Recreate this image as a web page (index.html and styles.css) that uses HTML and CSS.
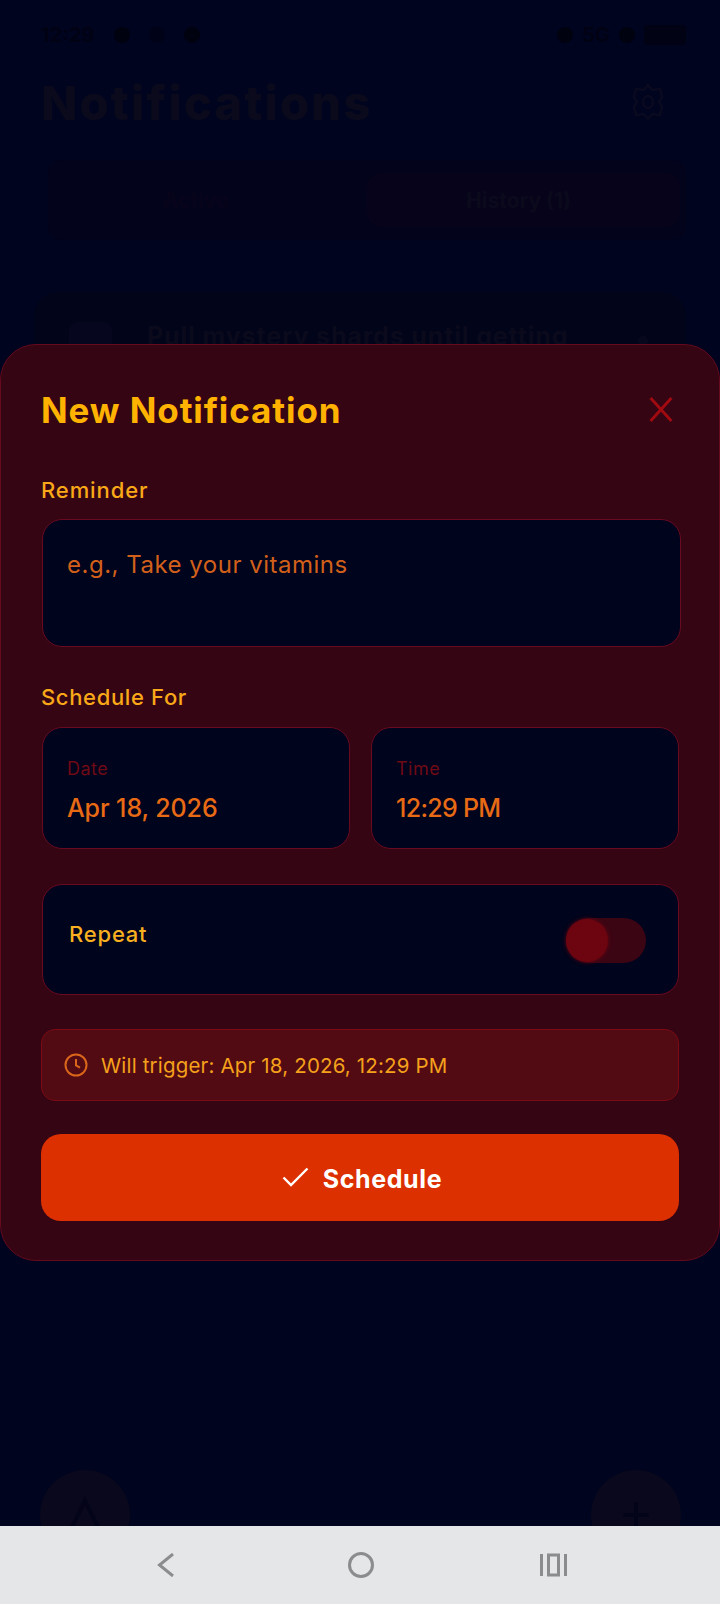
FILE: index.html
```html
<!DOCTYPE html>
<html lang="en">
<head>
<meta charset="utf-8">
<title>New Notification</title>
<link rel="stylesheet" href="styles.css">
</head>
<body>
<div class="screen">
  <main class="app">
    <div class="status">
      <div class="status-left"><span>12:29</span><i class="dot"></i><i class="dot dim"></i><i class="dot"></i></div>
      <div class="status-right"><i class="dot"></i><span>5G</span><i class="dot"></i><i class="batt"></i></div>
    </div>
    <header class="app-head">
      <h1>Notifications</h1>
      <svg class="gear" viewBox="0 0 32 38" fill="none" stroke="currentColor" stroke-width="2.500"><path d="M16 2l4 5 8-1 2 8-3 5 3 5-2 8-8-1-4 5-4-5-8 1-2-8 3-5-3-5 2-8 8 1z"/><ellipse cx="16" cy="19" rx="5" ry="6"/></svg>
    </header>
    <div class="tabs">
      <div class="tab">Active</div>
      <div class="tab tab-on">History (1)</div>
    </div>
    <div class="card">
      <div class="card-icon"></div>
      <div class="card-text">Pull mystery shards until getting</div>
      <i class="card-dot"></i>
    </div>
    <div class="fab fab-left"><svg viewBox="0 0 24 24" fill="none" stroke="currentColor" stroke-width="2.500"><path d="M12 3L3 21h18z"/></svg></div>
    <div class="fab fab-right"><svg viewBox="0 0 24 24" fill="none" stroke="currentColor" stroke-width="2.500"><path d="M12 4v16M4 12h16"/></svg></div>
  </main>

  <section class="sheet">
    <div class="sheet-head">
      <h2>New Notification</h2>
      <svg class="close" viewBox="0 0 24 24" fill="none" stroke="currentColor" stroke-width="2.800"><path d="M2 1l20 22M22 1L2 23"/></svg>
    </div>
    <label class="label label-reminder">Reminder</label>
    <div class="textarea">e.g., Take your vitamins</div>
    <label class="label label-schedule">Schedule For</label>
    <div class="pickers">
      <div class="picker"><div class="picker-label">Date</div><div class="picker-value">Apr 18, 2026</div></div>
      <div class="picker"><div class="picker-label">Time</div><div class="picker-value picker-time">12:29 PM</div></div>
    </div>
    <div class="repeat">
      <span class="repeat-label">Repeat</span>
      <div class="switch"><i class="thumb"></i></div>
    </div>
    <div class="trigger">
      <svg class="clock" viewBox="0 0 24 24" fill="none" stroke="currentColor" stroke-width="2"><circle cx="12" cy="12" r="10.500"/><path d="M12 6v6.500l4 2.200"/></svg>
      <span>Will trigger: Apr 18, 2026, 12:29 PM</span>
    </div>
    <button class="submit" type="button">
      <svg class="check" viewBox="0 0 27 20" fill="none" stroke="currentColor" stroke-width="2.400"><path d="M1.500 10.500l7.500 7.500L25.500 1.500"/></svg>
      <span>Schedule</span>
    </button>
  </section>

  <nav class="sysnav">
    <svg class="nav-back" viewBox="0 0 18 24" fill="none" stroke="currentColor" stroke-width="3"><path d="M16 1L2.500 12 16 23"/></svg>
    <svg class="nav-home" viewBox="0 0 26 26" fill="none" stroke="currentColor" stroke-width="3"><circle cx="13" cy="13" r="11.500"/></svg>
    <svg class="nav-recent" viewBox="0 0 27 24" fill="none" stroke="currentColor" stroke-width="3"><path d="M1.500 1v22M25.500 1v22"/><rect x="8.500" y="2" width="10" height="20"/></svg>
  </nav>
</div>
</body>
</html>
```
FILE: styles.css
```css
* { box-sizing: border-box; }
html, body { margin: 0; padding: 0; }
body { width: 720px; height: 1604px; overflow: hidden; font-family: "Inter", "Open Sans", sans-serif; background: #00041f; }

.screen { position: relative; width: 720px; height: 1604px; display: flex; flex-direction: column; }

.app { position: relative; flex: 1; min-height: 0; overflow: hidden; background: #00041f; padding: 22px 34px 0; color: #0a0a1b; }

.status { display: flex; justify-content: space-between; align-items: center; height: 26px; padding: 0 0 0 7px; color: #010213; font-size: 20px; font-weight: 700; }
.status-left { display: flex; align-items: center; gap: 19px; }
.status-right { display: flex; align-items: center; gap: 9px; }
.dot { display: block; width: 16px; height: 16px; border-radius: 50%; background: #000210; }
.dot.dim { opacity: .5; }
.batt { display: block; width: 42px; height: 20px; background: #010214; border-radius: 4px; }

.app-head { display: flex; justify-content: space-between; align-items: center; height: 56px; margin-top: 26px; padding: 0 22px 0 7px; }
.app-head h1 { margin: 0; font-size: 47px; font-weight: 800; letter-spacing: 2.2px; color: #0a0a1c; line-height: 1; }
.gear { width: 32px; height: 38px; color: #090920; }

.tabs { display: flex; margin: 30px 0 0 14px; height: 80px; padding: 13px 6px; background: #03031b; border-radius: 14px; font-size: 21px; }
.tab { flex: 1; display: flex; align-items: center; justify-content: center; color: #07031b; font-weight: 700; padding-right: 30px; }
.tab-on { flex: 0 0 313px; padding-right: 10px; background: #06031b; border-radius: 14px; color: #0b0a1c; }

.card { display: flex; align-items: flex-start; gap: 35px; margin-top: 52px; height: 200px; padding: 30px 0 0 35px; background: #02041a; border-radius: 24px; }
.card-icon { width: 43px; height: 43px; background: #06071e; border-radius: 8px; flex: none; }
.card-text { font-size: 25px; font-weight: 700; color: #0a0a1c; line-height: 28px; white-space: nowrap; letter-spacing: .85px; width: 415px; flex: none; }
.card-dot { display: block; width: 10px; height: 10px; margin: 14px 0 0 41px; border-radius: 50%; background: #07081e; }

.fab { position: absolute; top: 1470px; width: 90px; height: 90px; border-radius: 50%; background: #09081c; color: #03041a; display: flex; align-items: center; justify-content: center; }
.fab svg { width: 38px; height: 38px; }
.fab-left { left: 40px; }
.fab-right { left: 591px; }

.sheet { position: absolute; left: 0; top: 344px; width: 720px; height: 917px; padding: 0 40px; background: #350513; border: 1px solid #650a1c; border-radius: 36px; color: #f9a818; }

.sheet-head { display: flex; justify-content: space-between; align-items: center; height: 40px; margin-top: 45px; padding-right: 5px; }
.sheet-head h2 { margin: 0; font-size: 35px; font-weight: 700; color: #ffb300; line-height: 40px; letter-spacing: .9px; }
.close { width: 26px; height: 25px; margin-top: -2px; color: #a00a10; }

.label { display: block; font-size: 22px; font-weight: 500; line-height: 26px; }
.label-reminder { margin-top: 47px; letter-spacing: .9px; }
.label-schedule { margin-top: 37px; letter-spacing: .65px; }

.textarea { margin: 16px 0 0 1px; height: 128px; width: 639px; padding: 30px 24px 0; background: #00041c; border: 1px solid #6a0a20; border-radius: 20px; color: #d2601a; font-size: 24px; line-height: 30px; letter-spacing: .5px; }

.pickers { display: flex; gap: 21px; margin: 17px 0 0 1px; }
.picker { flex: none; width: 308px; height: 122px; padding: 30px 24px 0; background: #00041c; border: 1px solid #6a0a20; border-radius: 20px; }
.picker-label { font-size: 18px; line-height: 22px; color: #6e0a16; letter-spacing: .5px; }
.picker-value { margin-top: 13px; font-size: 25px; line-height: 30px; font-weight: 500; color: #e86a15; letter-spacing: -.1px; }
.picker-time { letter-spacing: -.7px; }

.repeat { display: flex; justify-content: space-between; align-items: flex-start; margin: 35px 0 0 1px; width: 637px; height: 111px; padding: 36px 32px 0 26px; background: #00041c; border: 1px solid #6a0a20; border-radius: 20px; }
.repeat-label { font-size: 22px; line-height: 26px; font-weight: 500; color: #f9b020; letter-spacing: .8px; }
.switch { position: relative; width: 80px; height: 45px; margin-top: -3px; border-radius: 23px; background: #3c0514; }
.thumb { position: absolute; left: 0; top: 1px; width: 42px; height: 43px; border-radius: 50%; background: #6c0510; box-shadow: 0 0 4px #6c0510; }

.trigger { display: flex; align-items: center; gap: 13px; margin-top: 34px; width: 638px; height: 72px; padding: 0 22px; background: #520b12; border: 1px solid #7a0a14; border-radius: 14px; font-size: 20.500px; letter-spacing: .17px; color: #f5a11c; }
.clock { width: 24px; height: 24px; color: #d9661a; flex: none; }

.submit { display: flex; align-items: center; justify-content: center; gap: 14px; margin-top: 33px; width: 638px; height: 87px; padding: 2px 0 0 4px; border: 0; border-radius: 20px; background: #dc3000; color: #fff; font-family: inherit; font-size: 25px; font-weight: 700; letter-spacing: .6px; }
.check { width: 27px; height: 20px; margin-top: -3px; }

.sysnav { flex: none; position: relative; height: 78px; background: #e5e6e8; display: flex; align-items: center; color: #8b8c8e; padding: 0 0 0 157px; }
.nav-back { width: 18px; height: 24px; margin-top: -1px; }
.nav-home { width: 26px; height: 26px; margin: -1px 0 0 173px; }
.nav-recent { width: 27px; height: 24px; margin: -1px 0 0 166px; }
```
